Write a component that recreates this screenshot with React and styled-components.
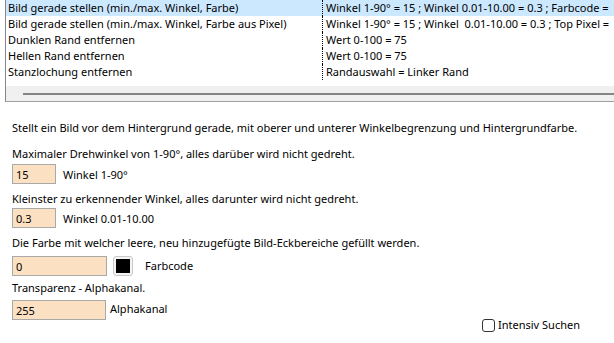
import styled, { createGlobalStyle } from 'styled-components';

const GlobalStyle = createGlobalStyle`
    html, body {
        margin: 0;
        padding: 0;
        background: #ffffff;
    }
    body {
        font-family: "Noto Sans", "Open Sans", sans-serif;
        font-size: 11px;
        color: #000000;
    }
`;

const Page = styled.div`
    width: 614px;
    height: 343px;
    overflow: hidden;
    background: #ffffff;
`;

const ListBox = styled.div`
    margin-left: 5px;
    width: 640px;
    height: 101px;
    border-left: 1px solid #828790;
    border-bottom: 1px solid #a0a0a0;
    display: flex;
    flex-direction: column;
`;

const Rows = styled.div`
    height: 86px;
`;

const Row = styled.div`
    display: grid;
    grid-template-columns: 316px 1fr;
    height: 16px;
    line-height: 16px;
    background: ${p => (p.$selected ? '#cce8ff' : 'transparent')};
    white-space: pre;
`;

const NameCell = styled.div`
    padding-left: 2px;
    overflow: hidden;
`;

const ValueCell = styled.div`
    padding-left: 3px;
    border-left: 1px dotted #000000;
    overflow: hidden;
`;

const ScrollBar = styled.div`
    flex: 1;
    background: #f0f0f0;
    display: flex;
    align-items: center;
    padding-left: 17px;
`;

const Thumb = styled.div`
    flex: 1;
    height: 2px;
    background: #858585;
`;

const Details = styled.div`
    padding: 18px 34px 0 12px;
    display: flex;
    flex-direction: column;
`;

const Text = styled.div`
    line-height: 16px;
    white-space: nowrap;
    margin-top: ${p => p.$top || 0}px;
`;

const FieldRow = styled.div`
    display: flex;
    align-items: center;
    margin-top: ${p => p.$top || 0}px;
`;

const Field = styled.div`
    box-sizing: border-box;
    width: ${p => p.$width}px;
    height: 20px;
    border: 1px solid #a9a9a9;
    padding-left: 3px;
    line-height: 19px;
    background: #fce0c2;
`;

const FieldLabel = styled.span`
    margin-left: ${p => p.$gap}px;
    margin-top: ${p => p.$shift || 0}px;
`;

const Swatch = styled.div`
    box-sizing: border-box;
    width: 20px;
    height: 20px;
    margin-left: 6px;
    border: 1px solid #c8c8c8;
    border-radius: 3px;
    padding: 2px;
    background: #f4f4f4;
`;

const SwatchColor = styled.div`
    width: 100%;
    height: 100%;
    background: #000000;
`;

const Footer = styled.div`
    display: flex;
    align-items: flex-start;
    margin-top: 4px;
`;

const Check = styled.label`
    margin-left: auto;
    margin-top: 17px;
    display: flex;
    align-items: center;
    gap: 3px;
    line-height: 16px;
`;

const Box = styled.span`
    box-sizing: border-box;
    width: 13px;
    height: 13px;
    border: 1px solid #333333;
    border-radius: 3px;
    background: #ffffff;
`;

const rows = [
    ['Bild gerade stellen (min./max. Winkel, Farbe)', 'Winkel 1-90° = 15 ; Winkel 0.01-10.00 = 0.3 ; Farbcode ='],
    ['Bild gerade stellen (min./max. Winkel, Farbe aus Pixel)', 'Winkel 1-90° = 15 ; Winkel  0.01-10.00 = 0.3 ; Top Pixel ='],
    ['Dunklen Rand entfernen', 'Wert 0-100 = 75'],
    ['Hellen Rand entfernen', 'Wert 0-100 = 75'],
    ['Stanzlochung entfernen', 'Randauswahl = Linker Rand'],
];

const App = () => {
    return (
        <Page>
            <GlobalStyle />
            <ListBox>
                <Rows>
                    {rows.map(([name, value], i) => (
                        <Row key={name} $selected={i === 0}>
                            <NameCell>{name}</NameCell>
                            <ValueCell>{value}</ValueCell>
                        </Row>
                    ))}
                </Rows>
                <ScrollBar>
                    <Thumb />
                </ScrollBar>
            </ListBox>
            <Details>
                <Text>Stellt ein Bild vor dem Hintergrund gerade, mit oberer und unterer Winkelbegrenzung und Hintergrundfarbe.</Text>
                <Text $top={10}>Maximaler Drehwinkel von 1-90°, alles darüber wird nicht gedreht.</Text>
                <FieldRow $top={2}>
                    <Field $width={44}>15</Field>
                    <FieldLabel $gap={7}>Winkel 1-90°</FieldLabel>
                </FieldRow>
                <Text $top={7}>Kleinster zu erkennender Winkel, alles darunter wird nicht gedreht.</Text>
                <FieldRow $top={1}>
                    <Field $width={44}>0.3</Field>
                    <FieldLabel $gap={7}>Winkel 0.01-10.00</FieldLabel>
                </FieldRow>
                <Text $top={7}>Die Farbe mit welcher leere, neu hinzugefügte Bild-Eckbereiche gefüllt werden.</Text>
                <FieldRow $top={5}>
                    <Field $width={95}>0</Field>
                    <Swatch>
                        <SwatchColor />
                    </Swatch>
                    <FieldLabel $gap={12} $shift={-2}>Farbcode</FieldLabel>
                </FieldRow>
                <Text $top={4}>Transparenz - Alphakanal.</Text>
                <Footer>
                    <FieldRow>
                        <Field $width={94}>255</Field>
                        <FieldLabel $gap={4} $shift={-3}>Alphakanal</FieldLabel>
                    </FieldRow>
                    <Check>
                        <Box />
                        Intensiv Suchen
                    </Check>
                </Footer>
            </Details>
        </Page>
    );
};

export default App;
